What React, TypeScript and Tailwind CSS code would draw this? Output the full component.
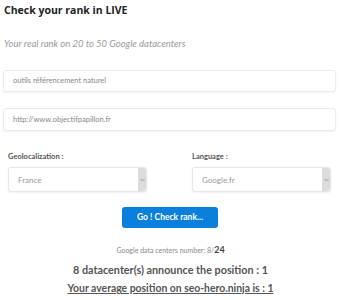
import React from 'react';

// Small select box with the grey native-looking scroll arrow on the right
function FakeSelect({ value }: { value: string }) {
  return (
    <div className="flex h-[25px] w-[139px] items-stretch rounded-[3px] border border-[#e6e6e6] bg-white shadow-[0_1px_2px_rgba(0,0,0,0.06)]">
      <span className="flex flex-1 items-center pl-[9px] text-[8px] text-[#999]">{value}</span>
      <span className="flex w-[8px] items-center justify-center rounded-r-[3px] bg-[#dcdcdc]">
        <svg width="5" height="4" viewBox="0 0 5 4">
          <path d="M0.5 1 L2.5 3 L4.5 1" fill="none" stroke="#888" strokeWidth="0.8" />
        </svg>
      </span>
    </div>
  );
}

export default function App() {
  return (
    <div
      className="h-[300px] w-[341px] overflow-hidden bg-white"
      style={{ fontFamily: '"Lato", "Open Sans", sans-serif' }}
    >
      {/* Heading */}
      <h1
        className="pl-[4px] pt-[3px] text-[10.5px] font-bold leading-[14px] text-[#222]"
        style={{ fontFamily: '"Open Sans", sans-serif' }}
      >
        Check your rank in LIVE
      </h1>

      <p className="mt-[21px] pl-[4px] text-[9.5px] font-normal italic leading-[12px] text-[#9a9a9a]">
        Your real rank on 20 to 50 Google datacenters
      </p>

      {/* Keyword + URL */}
      <div className="mt-[20px] flex flex-col gap-[16px] pl-[3px] pr-[5px]">
        <div className="flex h-[22px] items-center rounded-[3px] border border-[#ebebeb] bg-white pl-[9px] text-[7.5px] text-[#888] shadow-[0_1px_2px_rgba(0,0,0,0.05)]">
          outils référencement naturel
        </div>
        <div className="flex h-[23px] items-center rounded-[3px] border border-[#ebebeb] bg-white pl-[9px] text-[7.5px] text-[#888] shadow-[0_1px_2px_rgba(0,0,0,0.05)]">
          http://www.objectifpapillon.fr
        </div>
      </div>

      {/* Geolocalization / Language */}
      <div className="mt-[21px] flex gap-[45px] pl-[8px]">
        <div className="flex flex-col gap-[5px]">
          <span className="text-[7.5px] font-bold leading-[10px] text-[#555]">Geolocalization :</span>
          <FakeSelect value="France" />
        </div>
        <div className="flex flex-col gap-[5px]">
          <span className="text-[7.5px] font-bold leading-[10px] text-[#555]">Language :</span>
          <FakeSelect value="Google.fr" />
        </div>
      </div>

      <div className="mt-[15px] flex justify-center pr-[1px]">
        <button className="h-[21px] w-[96px] rounded-[3px] bg-[#0b7fdc] text-[8.5px] font-bold text-white">
          Go ! Check rank...
        </button>
      </div>

      {/* Results */}
      <div className="mt-[16px] flex flex-col items-center text-[#555]">
        <p className="text-[7px] leading-[12px] text-[#888]">
          Google data centers number: 8/<span className="text-[9px] font-bold text-[#444]">24</span>
        </p>
        <p className="mt-[7px] text-[10.8px] font-bold leading-[14px] text-[#555]">
          8 datacenter(s) announce the position : 1
        </p>
        <p className="mt-[4px] text-[10.4px] font-bold leading-[14px] text-[#555] underline">
          Your average position on seo-hero.ninja is : 1
        </p>
      </div>
    </div>
  );
}
